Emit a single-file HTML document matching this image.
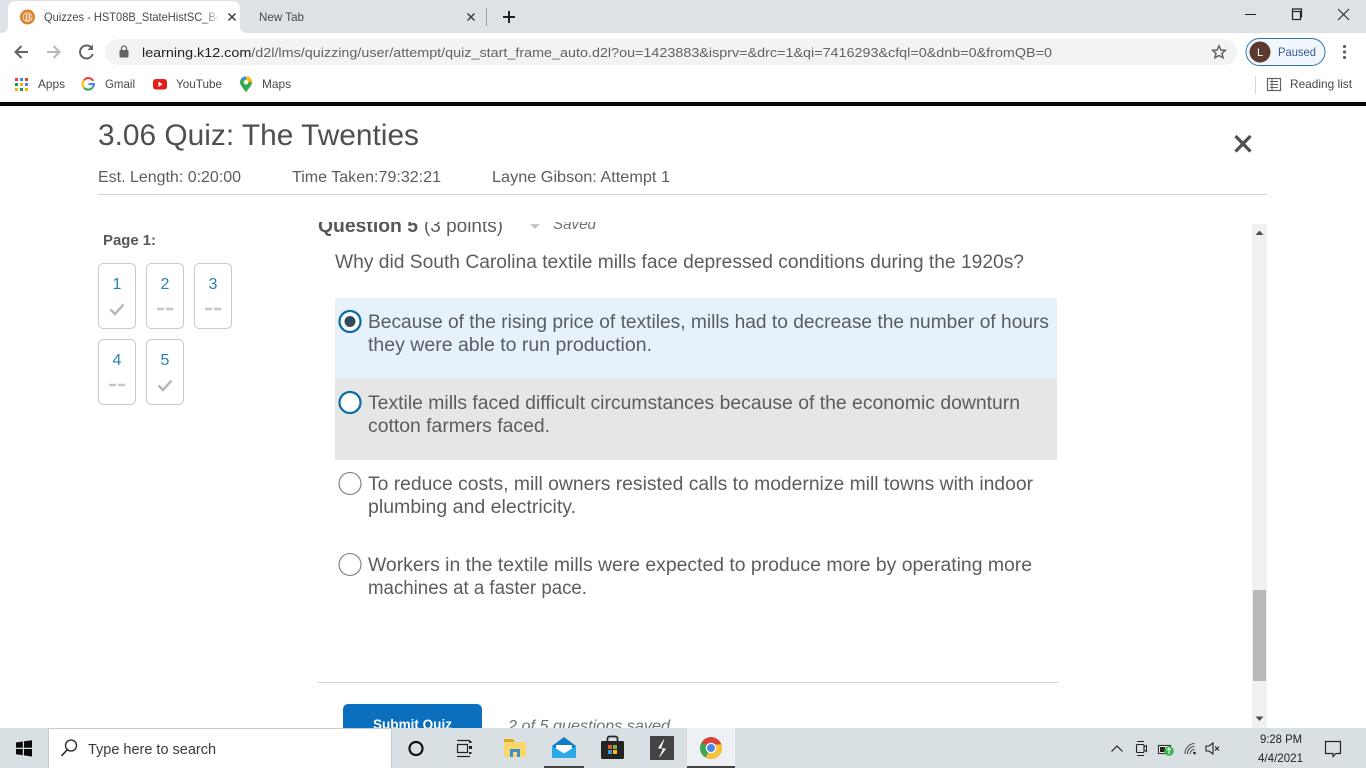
<!DOCTYPE html>
<html lang="en">
<head>
<meta charset="utf-8">
<title>Quizzes</title>
<style>
html,body{margin:0;padding:0;background:#fff;width:1366px;height:768px;overflow:hidden}
svg{display:block;position:absolute;left:0;top:0}
text{font-family:"Liberation Sans",sans-serif;white-space:pre}
.c{font-size:12px;fill:#45484b}
.q{font-size:19px;fill:#5a5d5f}
.n{font-size:16px;fill:#2a80b4;text-anchor:middle}
.m{font-size:16px;fill:#5a5d5f}
</style>
</head>
<body>
<svg width="1366" height="768" viewBox="0 0 1366 768" xmlns="http://www.w3.org/2000/svg">
<defs>
<clipPath id="qc"><rect x="300" y="222" width="900" height="60"/></clipPath>
<clipPath id="bc"><rect x="300" y="690" width="900" height="38"/></clipPath>
<clipPath id="tc"><rect x="40" y="5" width="178" height="24"/></clipPath>
<linearGradient id="fade" x1="0" x2="1"><stop offset="0" stop-color="#fff" stop-opacity="0"/><stop offset="1" stop-color="#fff"/></linearGradient>
</defs>

<!-- Chrome tab strip -->
<rect width="1366" height="33" fill="#dee1e6"/>
<path d="M0 33 C5 33 8 31 8 26 V9 C8 4 11 1 16 1 H232 C237 1 240 4 240 9 V26 C240 31 243 33 248 33 Z" fill="#fff"/>
<circle cx="27.500" cy="17" r="7.500" fill="#d9802c"/>
<circle cx="27.500" cy="17" r="4.500" fill="none" stroke="#f7dcb8" stroke-width="1"/>
<text x="25" y="20.500" fill="#fff" style="font-size:9px">B</text>
<g clip-path="url(#tc)"><text class="c" x="44" y="21" textLength="178" lengthAdjust="spacingAndGlyphs">Quizzes - HST08B_StateHistSC_Be</text></g>
<rect x="205" y="5" width="14" height="24" fill="url(#fade)"/>
<path d="M228.500 13.500 L235.500 20.500 M235.500 13.500 L228.500 20.500" stroke="#3c4043" stroke-width="1.500"/>
<text class="c" x="259" y="21" textLength="45" lengthAdjust="spacingAndGlyphs">New Tab</text>
<path d="M467.500 13.500 L474.500 20.500 M474.500 13.500 L467.500 20.500" stroke="#3c4043" stroke-width="1.500"/>
<rect x="486" y="8" width="1" height="18" fill="#9aa0a6"/>
<path d="M509 11 V23 M503 17 H515" stroke="#202124" stroke-width="2"/>
<path d="M1245 14.500 H1256" stroke="#222" stroke-width="1"/>
<path d="M1292.500 11.500 V9 H1301.500 V17 H1300.500" fill="none" stroke="#222" stroke-width="1.200"/>
<rect x="1292.500" y="11.500" width="8" height="8" fill="none" stroke="#222" stroke-width="1.200"/>
<path d="M1338 9 L1349 20 M1349 9 L1338 20" stroke="#222" stroke-width="1"/>

<!-- Toolbar -->
<rect y="33" width="1366" height="39" fill="#fff"/>
<path d="M28 52 H16 M21.500 46 L15.500 52 L21.500 58" fill="none" stroke="#5f6368" stroke-width="2"/>
<path d="M47 52 H59 M53.500 46 L59.500 52 L53.500 58" fill="none" stroke="#b4b7bb" stroke-width="2"/>
<path d="M91.500 47.800 A6.500 6.500 0 1 0 92.700 54" fill="none" stroke="#5f6368" stroke-width="2"/>
<path d="M93 44.500 V50 H87.500 Z" fill="#5f6368"/>
<rect x="105" y="39" width="1132" height="26" rx="13" fill="#f1f3f4"/>
<rect x="119.500" y="50" width="9" height="7.500" rx="1" fill="#5f6368"/>
<path d="M121.500 50 V48.500 A2.500 2.500 0 0 1 126.500 48.500 V50" fill="none" stroke="#5f6368" stroke-width="1.300"/>
<text x="142" y="57" textLength="910" lengthAdjust="spacingAndGlyphs" style="font-size:13px" fill="#5f6368"><tspan fill="#202124">learning.k12.com</tspan>/d2l/lms/quizzing/user/attempt/quiz_start_frame_auto.d2l?ou=1423883&amp;isprv=&amp;drc=1&amp;qi=7416293&amp;cfql=0&amp;dnb=0&amp;fromQB=0</text>
<path d="M1219 45.800 L1220.900 50 L1225.300 50.400 L1222 53.400 L1223 57.800 L1219 55.500 L1215 57.800 L1216 53.400 L1212.700 50.400 L1217.100 50 Z" fill="none" stroke="#5f6368" stroke-width="1.500"/>
<rect x="1246" y="38.500" width="79" height="27" rx="13.500" fill="#e8f0fe" fill-opacity=".55" stroke="#2a78ad" stroke-width="1"/>
<circle cx="1260" cy="52" r="10.500" fill="#5d3a2f"/>
<text x="1257" y="56" style="font-size:11px" fill="#fff">L</text>
<text x="1278" y="56" textLength="38" lengthAdjust="spacingAndGlyphs" style="font-size:12px" fill="#33589c">Paused</text>
<circle cx="1344.500" cy="46.500" r="1.600" fill="#5f6368"/><circle cx="1344.500" cy="52" r="1.600" fill="#5f6368"/><circle cx="1344.500" cy="57.500" r="1.600" fill="#5f6368"/>

<!-- Bookmarks -->
<g>
<rect x="15" y="78" width="3" height="3" fill="#db4437"/><rect x="20" y="78" width="3" height="3" fill="#4285f4"/><rect x="25" y="78" width="3" height="3" fill="#db4437"/>
<rect x="15" y="83" width="3" height="3" fill="#0f9d58"/><rect x="20" y="83" width="3" height="3" fill="#f4b400"/><rect x="25" y="83" width="3" height="3" fill="#4285f4"/>
<rect x="15" y="88" width="3" height="3" fill="#f4b400"/><rect x="20" y="88" width="3" height="3" fill="#0f9d58"/><rect x="25" y="88" width="3" height="3" fill="#f4b400"/>
</g>
<text class="c" x="38" y="88" textLength="27" lengthAdjust="spacingAndGlyphs">Apps</text>
<path d="M93.300 81 A5.500 5.500 0 0 0 84 80.300" fill="none" stroke="#ea4335" stroke-width="2"/>
<path d="M84 80.300 A5.500 5.500 0 0 0 84 87.700" fill="none" stroke="#fbbc05" stroke-width="2"/>
<path d="M84 87.700 A5.500 5.500 0 0 0 92.500 87.500" fill="none" stroke="#34a853" stroke-width="2"/>
<path d="M92.500 87.500 A5.500 5.500 0 0 0 94 84 H88.500" fill="none" stroke="#4285f4" stroke-width="2"/>
<text class="c" x="105" y="88" textLength="30" lengthAdjust="spacingAndGlyphs">Gmail</text>
<rect x="153" y="79" width="14" height="10.500" rx="3" fill="#e0201b"/>
<path d="M158.500 81.500 L162.500 84.200 L158.500 87 Z" fill="#fff"/>
<text class="c" x="176" y="88" textLength="46" lengthAdjust="spacingAndGlyphs">YouTube</text>
<path d="M246 76.500 C242.500 76.500 240 79 240 82.300 C240 86 244 89 246 92.500 C248 89 252 86 252 82.300 C252 79 249.500 76.500 246 76.500 Z" fill="#34a853"/>
<path d="M241 79 C242 77.300 244 76.500 246 76.500 L246 80 Z" fill="#4285f4"/>
<path d="M246 76.500 C249.500 76.500 252 79 252 82.300 L246 82 Z" fill="#fbbc05"/>
<circle cx="246" cy="82.300" r="2.300" fill="#fff"/>
<text class="c" x="262" y="88" textLength="29" lengthAdjust="spacingAndGlyphs">Maps</text>
<rect x="1255" y="76" width="1" height="18" fill="#d5d7da"/>
<rect x="1267.500" y="78.500" width="13" height="12" fill="none" stroke="#5f6368" stroke-width="1.200"/>
<path d="M1270 81.500 H1278 M1270 84.500 H1278 M1270 87.500 H1278 M1272 79 V90" stroke="#5f6368" stroke-width="1"/>
<text class="c" x="1290" y="88" textLength="62" lengthAdjust="spacingAndGlyphs">Reading list</text>

<rect y="102" width="1366" height="4" fill="#050505"/>

<!-- Quiz header -->
<text x="98" y="145" textLength="321" lengthAdjust="spacingAndGlyphs" style="font-size:30px" fill="#4d5052">3.06 Quiz: The Twenties</text>
<path d="M1235.500 136 L1250.500 151.500 M1250.500 136 L1235.500 151.500" stroke="#4d5052" stroke-width="3.200"/>
<text class="m" x="98" y="182" textLength="143" lengthAdjust="spacingAndGlyphs">Est. Length: 0:20:00</text>
<text class="m" x="292" y="182" textLength="149" lengthAdjust="spacingAndGlyphs">Time Taken:79:32:21</text>
<text class="m" x="492" y="182" textLength="178" lengthAdjust="spacingAndGlyphs">Layne Gibson: Attempt 1</text>
<rect x="98" y="194" width="1169" height="1" fill="#d3d3d3"/>

<!-- Sidebar -->
<text x="103" y="245" textLength="53" lengthAdjust="spacingAndGlyphs" style="font-size:15px;font-weight:700" fill="#55585a">Page 1:</text>
<g fill="#fff" stroke="#c9cbcd" stroke-width="1">
<rect x="98.500" y="263.500" width="37" height="65" rx="5"/>
<rect x="146.500" y="263.500" width="37" height="65" rx="5"/>
<rect x="194.500" y="263.500" width="37" height="65" rx="5"/>
<rect x="98.500" y="339.500" width="37" height="65" rx="5"/>
<rect x="146.500" y="339.500" width="37" height="65" rx="5"/>
</g>
<text class="n" x="117" y="289">1</text>
<text class="n" x="165" y="289">2</text>
<text class="n" x="213" y="289">3</text>
<text class="n" x="117" y="365">4</text>
<text class="n" x="165" y="365">5</text>
<path d="M110.500 309.500 L115 314 L123.500 304.500" fill="none" stroke="#b3b5b7" stroke-width="2.400"/>
<path d="M158.500 385.500 L163 390 L171.500 380.500" fill="none" stroke="#b3b5b7" stroke-width="2.400"/>
<path d="M157 309 H164 M166 309 H173 M205 309 H212 M214 309 H221 M109 385 H116 M118 385 H125" stroke="#c4c6c8" stroke-width="2.400"/>

<!-- Question -->
<g clip-path="url(#qc)">
<text x="318" y="232" textLength="100" lengthAdjust="spacingAndGlyphs" style="font-size:19px;font-weight:700" fill="#55585a">Question 5</text>
<text x="424" y="232" textLength="79" lengthAdjust="spacingAndGlyphs" style="font-size:19px" fill="#5a5d5f">(3 points)</text>
<text x="553" y="229" textLength="43" lengthAdjust="spacingAndGlyphs" style="font-size:16px;font-style:italic" fill="#6e7376">Saved</text>
</g>
<path d="M530 224 H540 L535 229 Z" fill="#c4c6c8"/>
<text class="q" x="335" y="268" textLength="689" lengthAdjust="spacingAndGlyphs">Why did South Carolina textile mills face depressed conditions during the 1920s?</text>

<rect x="335" y="298" width="722" height="81" fill="#e6f1fb"/>
<rect x="335" y="379" width="722" height="81" fill="#e6e6e6"/>

<circle cx="350" cy="321.500" r="10.500" fill="#fff" stroke="#0a6ba6" stroke-width="2.200"/>
<circle cx="350" cy="321.500" r="5.500" fill="#2f4a5e"/>
<circle cx="350" cy="402.500" r="10.500" fill="#fff" stroke="#0a6ba6" stroke-width="2.200"/>
<circle cx="350" cy="483.500" r="11" fill="#fff" stroke="#77797b" stroke-width="1.100"/>
<circle cx="350" cy="564.500" r="11" fill="#fff" stroke="#77797b" stroke-width="1.100"/>

<text class="q" x="368" y="328" textLength="681" lengthAdjust="spacingAndGlyphs">Because of the rising price of textiles, mills had to decrease the number of hours</text>
<text class="q" x="368" y="351" textLength="284" lengthAdjust="spacingAndGlyphs">they were able to run production.</text>
<text class="q" x="368" y="409" textLength="652" lengthAdjust="spacingAndGlyphs">Textile mills faced difficult circumstances because of the economic downturn</text>
<text class="q" x="368" y="432" textLength="182" lengthAdjust="spacingAndGlyphs">cotton farmers faced.</text>
<text class="q" x="368" y="490" textLength="665" lengthAdjust="spacingAndGlyphs">To reduce costs, mill owners resisted calls to modernize mill towns with indoor</text>
<text class="q" x="368" y="513" textLength="208" lengthAdjust="spacingAndGlyphs">plumbing and electricity.</text>
<text class="q" x="368" y="571" textLength="664" lengthAdjust="spacingAndGlyphs">Workers in the textile mills were expected to produce more by operating more</text>
<text class="q" x="368" y="594" textLength="219" lengthAdjust="spacingAndGlyphs">machines at a faster pace.</text>

<rect x="318" y="682" width="740" height="1" fill="#d3d3d3"/>

<g clip-path="url(#bc)">
<rect x="343" y="704" width="139" height="50" rx="5" fill="#0a6fbe"/>
<text x="373" y="729" textLength="79" lengthAdjust="spacingAndGlyphs" style="font-size:14px;font-weight:700" fill="#fff">Submit Quiz</text>
<text x="508" y="731" textLength="162" lengthAdjust="spacingAndGlyphs" style="font-size:16px;font-style:italic" fill="#6e7376">2 of 5 questions saved</text>
</g>

<!-- Scrollbar -->
<rect x="1252" y="224" width="15" height="504" fill="#f1f1f1"/>
<rect x="1253" y="590" width="13" height="91" fill="#b9b9b9"/>
<path d="M1255.500 235 H1263.500 L1259.500 230.500 Z" fill="#505050"/>
<path d="M1255.500 716.500 H1263.500 L1259.500 721 Z" fill="#505050"/>

<!-- Taskbar -->
<rect y="728" width="1366" height="40" fill="#d9e0e4"/>
<g fill="#0b0b0b">
<path d="M16 742.500 L22.800 741.500 V747.700 H16 Z"/>
<path d="M24 741.300 L32 740.200 V747.700 H24 Z"/>
<path d="M16 749 H22.800 V755.200 L16 754.200 Z"/>
<path d="M24 749 H32 V756.500 L24 755.400 Z"/>
</g>
<rect x="48.500" y="728.500" width="343" height="40" fill="#fff" stroke="#c5cbcf"/>
<circle cx="71" cy="745.500" r="5.500" fill="none" stroke="#222" stroke-width="1.300"/>
<path d="M67 750 L61.500 756" stroke="#222" stroke-width="1.500"/>
<text x="88" y="754" textLength="128" lengthAdjust="spacingAndGlyphs" style="font-size:15px" fill="#3a3a3a">Type here to search</text>
<circle cx="416" cy="748.500" r="6.500" fill="none" stroke="#111" stroke-width="2.200"/>
<path d="M457 740.500 H470 M457 756.500 H470 M457.500 744.500 H467.500 V752.500 H457.500 Z" fill="none" stroke="#222" stroke-width="1.200"/>
<rect x="469" y="746" width="3" height="3" fill="#222"/>
<rect x="469" y="741" width="2.500" height="2" fill="#222"/>
<rect x="469" y="752" width="2.500" height="2" fill="#222"/>

<!-- Folder -->
<path d="M504 739 H513 L515 742 H504 Z" fill="#e0a526"/>
<rect x="504" y="742" width="22" height="15" fill="#fbd66b"/>
<rect x="510" y="749" width="10" height="8" fill="#3f8fc9"/>
<rect x="513" y="752" width="4" height="5" fill="#fbd66b"/>
<!-- Mail -->
<path d="M552 746 L564 737 L576 746 V758 H552 Z" fill="#0f7cc7"/>
<path d="M556 745 H572 V750 L564 754 L556 750 Z" fill="#fff"/>
<path d="M552 746 L564 753.500 L576 746 V758 H552 Z" fill="#2ba8e6"/>
<rect x="544" y="766" width="40" height="2" fill="#444"/>
<!-- Store -->
<rect x="601" y="741" width="23" height="18" rx="1.500" fill="#242424"/>
<path d="M607.500 741 V738.500 A2 2 0 0 1 609.500 736.500 H615.500 A2 2 0 0 1 617.500 738.500 V741" fill="none" stroke="#242424" stroke-width="1.700"/>
<rect x="608" y="745" width="4" height="4" fill="#e8562a"/>
<rect x="613" y="745" width="4" height="4" fill="#7fba2c"/>
<rect x="608" y="750" width="4" height="4" fill="#2b9ee4"/>
<rect x="613" y="750" width="4" height="4" fill="#fcb813"/>
<!-- Dark app -->
<rect x="650" y="736" width="24" height="24" fill="#444"/>
<path d="M664 739.500 L658.500 748 L663.500 748.500 L659.500 757 L665.500 749 L660.800 748 Z" fill="#fff" stroke="#fff" stroke-width=".6"/>
<!-- Chrome -->
<rect x="687" y="728" width="48" height="40" fill="#eef1f3"/>
<rect x="687" y="766" width="48" height="2" fill="#444"/>
<circle cx="711" cy="748" r="11" fill="#db4437"/>
<path d="M711 748 L701.500 742.500 A11 11 0 0 0 705.500 757.500 Z" fill="#3aa757"/>
<path d="M711 748 L705.500 757.500 A11 11 0 0 0 721.500 744.500 L711 744.500 Z" fill="#f5c33b"/>
<circle cx="711" cy="748" r="5.300" fill="#fff"/>
<circle cx="711" cy="748" r="4" fill="#4a86e8"/>

<!-- Tray -->
<path d="M1111.500 751.500 L1117 746 L1122.500 751.500" fill="none" stroke="#222" stroke-width="1.200"/>
<rect x="1136.500" y="744.500" width="7.500" height="8" rx="1" fill="none" stroke="#222" stroke-width="1.100"/>
<path d="M1144 747 L1146.500 745.500 V751.500 L1144 750" fill="none" stroke="#222" stroke-width="1"/>
<path d="M1137 741.500 H1144 M1137 755.500 H1144" stroke="#222" stroke-width="1"/>
<rect x="1158.500" y="745.500" width="12" height="8" fill="#fff" stroke="#333" stroke-width="1.200"/>
<rect x="1160" y="747" width="5" height="5" fill="#222"/>
<circle cx="1169" cy="751" r="4.800" fill="#35b34a"/>
<path d="M1169 748 V754 M1167 750 L1169 748 L1171 750" fill="none" stroke="#fff" stroke-width="1"/>
<path d="M1185 754 A10 10 0 0 1 1194.500 743.500 M1187.500 754 A7 7 0 0 1 1194.500 746.500 M1190 754 A4.500 4.500 0 0 1 1194.500 749.500" fill="none" stroke="#444" stroke-width="1"/>
<circle cx="1194.500" cy="753" r="1.300" fill="#222"/>
<path d="M1206 746 H1209 L1213 743 V754 L1209 751 H1206 Z" fill="none" stroke="#222" stroke-width="1.100"/>
<path d="M1215 746.500 L1219 750.500 M1219 746.500 L1215 750.500" stroke="#222" stroke-width="1.100"/>
<text x="1260" y="743" textLength="42" lengthAdjust="spacingAndGlyphs" style="font-size:12px" fill="#222">9:28 PM</text>
<text x="1258" y="762" textLength="45" lengthAdjust="spacingAndGlyphs" style="font-size:12px" fill="#222">4/4/2021</text>
<path d="M1325.500 741.500 H1340.500 V753.500 H1336 L1333 756.500 V753.500 H1325.500 Z" fill="none" stroke="#222" stroke-width="1.200"/>
</svg>
</body>
</html>
